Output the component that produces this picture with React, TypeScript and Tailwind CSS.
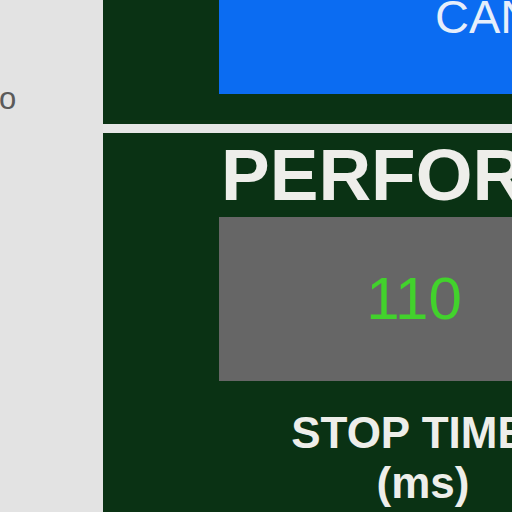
const Field = ({ value }: { value: string }) => (
  <div className="w-[390px] h-[164px] shrink-0 bg-[#666666] flex items-center justify-center">
    <span className="text-[60px] leading-none text-[#42d22c]">{value}</span>
  </div>
)

const App = () => {
  return (
    <div className="w-[512px] h-[512px] overflow-hidden flex bg-[#e3e3e3] font-['Liberation_Sans',Arial,sans-serif]">
      <div className="w-[103px] shrink-0 relative">
        <span className="absolute left-[-1px] top-[83px] text-[31px] leading-none text-[#5a5a5a]">o</span>
      </div>
      <div className="flex flex-col w-[520px] shrink-0">
        <section className="h-[124px] shrink-0 bg-[#0a3214] pl-[116px]">
          <div className="w-[390px] h-[94px] bg-[#0b6cf2] pl-[216px] overflow-hidden">
            <div className="text-[47px] leading-none text-[#e6eefb] mt-[-7px] whitespace-nowrap">CANCEL</div>
          </div>
        </section>
        <div className="h-[9px] shrink-0 bg-[#e6e6e6]" />
        <section className="flex-1 shrink-0 bg-[#0a3214] pl-[116px] pt-[5px]">
          <h1 className="text-[73px] font-bold leading-none text-[#eeeeea] whitespace-nowrap pl-[2px]">PERFORMANCE</h1>
          <div className="mt-[6px]">
            <Field value="110" />
          </div>
          <div className="w-[390px] mt-[27px] text-center text-[44px] font-bold leading-[50px] text-[#eeeeea] whitespace-nowrap">
            <div className="pr-[10px]">STOP TIME</div>
            <div className="pl-[18px]">(ms)</div>
          </div>
        </section>
      </div>
    </div>
  )
}

export default App
